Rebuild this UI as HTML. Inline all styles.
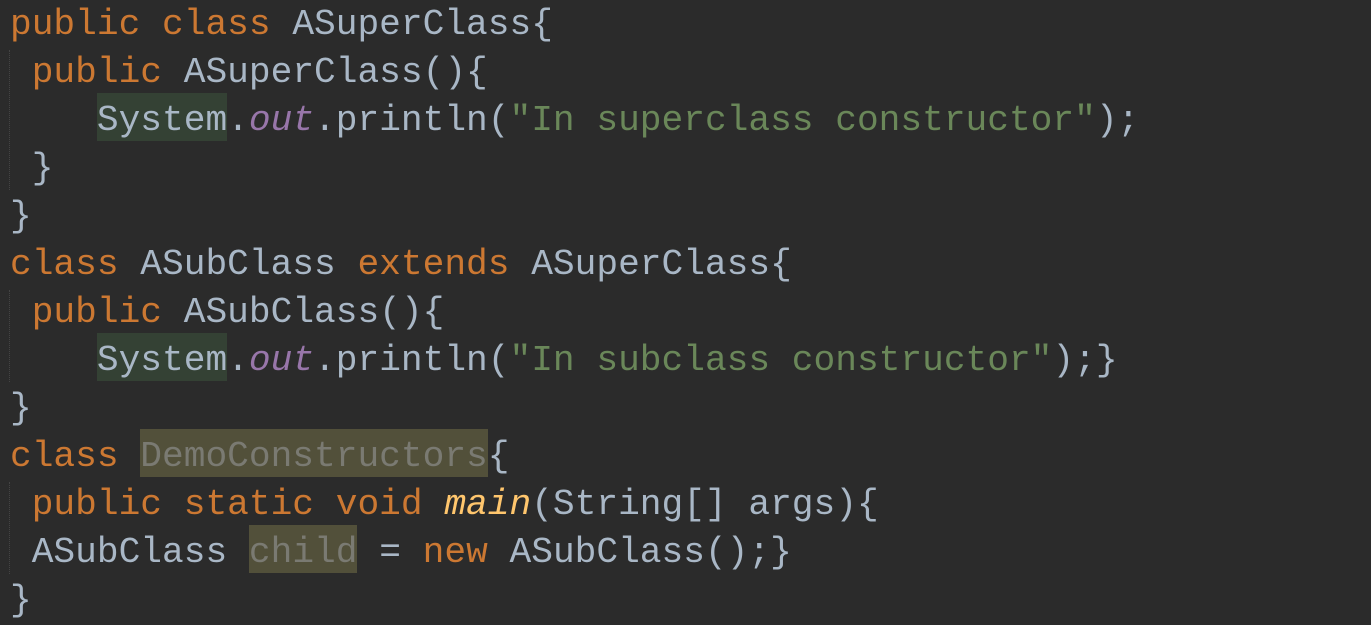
<!DOCTYPE html>
<html><head><style>
html,body{margin:0;padding:0;background:#2b2b2b;width:1371px;height:618px;overflow:hidden}
pre{margin:0;position:absolute;left:10px;top:1px;font-family:"Liberation Mono",monospace;font-size:36.2px;line-height:48px;color:#a9b7c6;white-space:pre}
.k{color:#cc7832}.s{color:#6a8759}.o{color:#9876aa;font-style:italic}.m{color:#ffc66d;font-style:italic}
.h{background:#344134;display:inline-block;height:48px;vertical-align:top;margin-top:-4px;padding-top:4px;box-sizing:border-box}
.u{background:#52503a;color:#7a7a72;display:inline-block;height:48px;vertical-align:top;margin-top:-4px;padding-top:4px;box-sizing:border-box}
.g{position:absolute;left:9px;width:0;border-left:1px dotted #444}
</style></head><body>
<div class="g" style="top:50px;height:140px"></div>
<div class="g" style="top:290px;height:92px"></div>
<div class="g" style="top:482px;height:92px"></div>
<pre><span class="k">public class </span>ASuperClass{
 <span class="k">public </span>ASuperClass(){
    <span class="h">System</span>.<span class="o">out</span>.println(<span class="s">"In superclass constructor"</span>);
 }
}
<span class="k">class </span>ASubClass <span class="k">extends </span>ASuperClass{
 <span class="k">public </span>ASubClass(){
    <span class="h">System</span>.<span class="o">out</span>.println(<span class="s">"In subclass constructor"</span>);}
}
<span class="k">class </span><span class="u">DemoConstructors</span>{
 <span class="k">public static void </span><span class="m">main</span>(String[] args){
 ASubClass <span class="u">child</span> = <span class="k">new </span>ASubClass();}
}</pre>
</body></html>
